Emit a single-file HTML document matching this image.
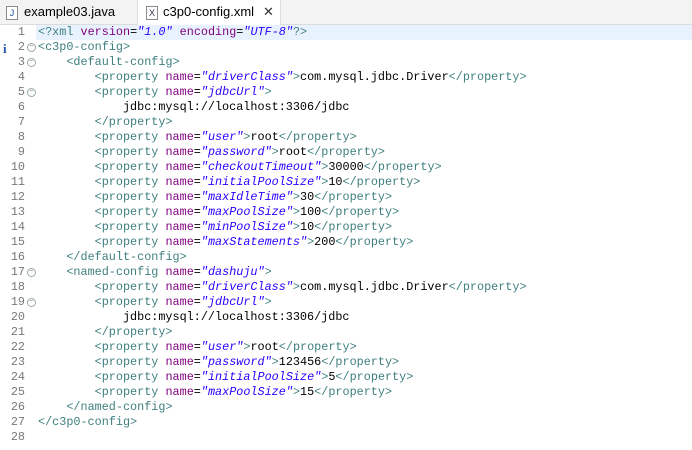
<!DOCTYPE html>
<html><head><style>
body{margin:0;width:692px;height:450px;background:#fff;overflow:hidden;font-family:"Liberation Mono",monospace;}
.tabs{position:absolute;left:0;top:0;width:692px;height:24px;background:#f3f3f3;border-bottom:1px solid #dcdcdc;font-family:"Liberation Sans",sans-serif;font-size:13px;color:#000;}
.tab{position:absolute;top:0;height:24px;line-height:24px;}
.t1{left:0;width:136px;}
.t2{left:137px;width:142px;background:#fff;border-left:1px solid #ddd;border-right:1px solid #ddd;height:25px;}
.ico{position:absolute;top:6px;width:10px;height:12px;border:1px solid #8a8a8a;font-size:9px;line-height:12px;text-align:center;color:#335;background:#fff}
.ed{position:absolute;left:0;top:25px;width:692px;}
.ln{position:absolute;height:15px;line-height:15px;font-size:11.8px;white-space:pre;}
.num{left:0;width:25px;text-align:right;color:#787878;}
.code{left:38px;}
.hl{position:absolute;left:36px;top:25px;width:656px;height:15px;background:#e8f2fe;}
.g{color:#3f7f7f}.a{color:#7f007f}.v{color:#2a00ff;font-style:italic}
.f{position:absolute;left:27px;width:7px;height:7px;border:1px solid #9aa;border-radius:50%;font-size:7px;line-height:7px;text-align:center;color:#666}
</style></head><body>
<div class="tabs">
<div class="tab t1"><span class="ico" style="left:6px;color:#2050a0">J</span><span style="position:absolute;left:24px">example03.java</span></div>
<div class="tab t2"><span class="ico" style="left:8px">X</span><span style="position:absolute;left:25px">c3p0-config.xml</span><span style="position:absolute;left:125px;color:#333">✕</span></div>
</div>
<div class="hl"></div>
<div style="position:absolute;left:3px;top:41px;color:#2255aa;font:bold 13px 'Liberation Serif',serif">i</div>
<div id="c"></div>
<script>
const L=[
'<g>&lt;?xml</g> <a>version</a>=<v>"1.0"</v> <a>encoding</a>=<v>"UTF-8"</v><g>?&gt;</g>',
'<g>&lt;c3p0-config&gt;</g>',
'    <g>&lt;default-config&gt;</g>',
'        <g>&lt;property</g> <a>name</a>=<v>"driverClass"</v><g>&gt;</g>com.mysql.jdbc.Driver<g>&lt;/property&gt;</g>',
'        <g>&lt;property</g> <a>name</a>=<v>"jdbcUrl"</v><g>&gt;</g>',
'            jdbc:mysql://localhost:3306/jdbc',
'        <g>&lt;/property&gt;</g>',
'        <g>&lt;property</g> <a>name</a>=<v>"user"</v><g>&gt;</g>root<g>&lt;/property&gt;</g>',
'        <g>&lt;property</g> <a>name</a>=<v>"password"</v><g>&gt;</g>root<g>&lt;/property&gt;</g>',
'        <g>&lt;property</g> <a>name</a>=<v>"checkoutTimeout"</v><g>&gt;</g>30000<g>&lt;/property&gt;</g>',
'        <g>&lt;property</g> <a>name</a>=<v>"initialPoolSize"</v><g>&gt;</g>10<g>&lt;/property&gt;</g>',
'        <g>&lt;property</g> <a>name</a>=<v>"maxIdleTime"</v><g>&gt;</g>30<g>&lt;/property&gt;</g>',
'        <g>&lt;property</g> <a>name</a>=<v>"maxPoolSize"</v><g>&gt;</g>100<g>&lt;/property&gt;</g>',
'        <g>&lt;property</g> <a>name</a>=<v>"minPoolSize"</v><g>&gt;</g>10<g>&lt;/property&gt;</g>',
'        <g>&lt;property</g> <a>name</a>=<v>"maxStatements"</v><g>&gt;</g>200<g>&lt;/property&gt;</g>',
'    <g>&lt;/default-config&gt;</g>',
'    <g>&lt;named-config</g> <a>name</a>=<v>"dashuju"</v><g>&gt;</g>',
'        <g>&lt;property</g> <a>name</a>=<v>"driverClass"</v><g>&gt;</g>com.mysql.jdbc.Driver<g>&lt;/property&gt;</g>',
'        <g>&lt;property</g> <a>name</a>=<v>"jdbcUrl"</v><g>&gt;</g>',
'            jdbc:mysql://localhost:3306/jdbc',
'        <g>&lt;/property&gt;</g>',
'        <g>&lt;property</g> <a>name</a>=<v>"user"</v><g>&gt;</g>root<g>&lt;/property&gt;</g>',
'        <g>&lt;property</g> <a>name</a>=<v>"password"</v><g>&gt;</g>123456<g>&lt;/property&gt;</g>',
'        <g>&lt;property</g> <a>name</a>=<v>"initialPoolSize"</v><g>&gt;</g>5<g>&lt;/property&gt;</g>',
'        <g>&lt;property</g> <a>name</a>=<v>"maxPoolSize"</v><g>&gt;</g>15<g>&lt;/property&gt;</g>',
'    <g>&lt;/named-config&gt;</g>',
'<g>&lt;/c3p0-config&gt;</g>',
''];
const folds=[2,3,5,17,19];
let h='';
L.forEach((s,i)=>{const y=25+i*15;
s=s.replace(/<(g|a|v)>/g,'<span class="$1">').replace(/<\/(g|a|v)>/g,'</span>');
h+=`<div class="ln num" style="top:${y}px">${i+1}</div><div class="ln code" style="top:${y}px">${s}</div>`;
if(folds.includes(i+1))h+=`<div class="f" style="top:${y+3}px">−</div>`;});
document.getElementById('c').innerHTML=h;
</script>
</body></html>
